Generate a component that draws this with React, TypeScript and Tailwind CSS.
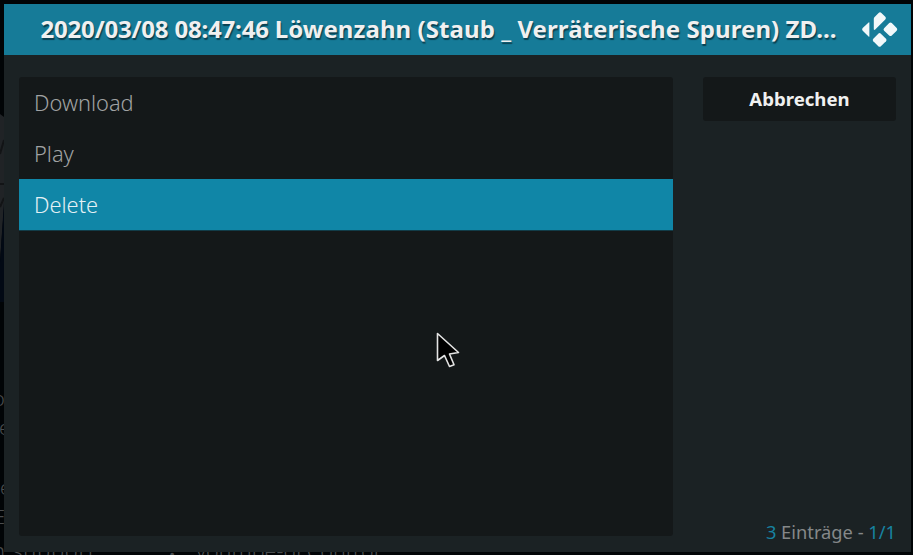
const entries = ['Download', 'Play', 'Delete'];

function KodiLogo() {
  return (
    <svg className="h-[37px] w-[37px]" viewBox="0 0 37 37" fill="#f2f8fa" aria-hidden="true">
      <path d="M13.4 6.2 17.6 1.9Q19 .6 20.4 1.9L24.3 5.8Q25.6 7.1 24.3 8.4L14.2 18.6Q12.8 19.6 12.8 18V8Q12.8 6.9 13.4 6.2Z" />
      <path d="M8.4 12V25.2Q8.4 26.2 7.6 25.5L1.7 19.7Q.4 18.4 1.7 17.1L7.6 11.5Q8.4 10.8 8.4 12Z" />
      <path d="M23.1 17.2 28.2 12.1Q29.5 10.9 30.8 12.1L35.7 17.1Q36.9 18.4 35.7 19.7L30.8 24.5Q29.5 25.7 28.2 24.5L23.1 19.7Q21.9 18.4 23.1 17.2Z" />
      <path d="M12.3 27.7 17.3 22.7Q18.6 21.5 19.9 22.7L25 27.7Q26.2 29 25 30.3L19.9 35.2Q18.6 36.4 17.3 35.2L12.3 30.3Q11.1 29 12.3 27.7Z" />
    </svg>
  );
}

function Backdrop() {
  return (
    <div className="absolute inset-0 overflow-hidden bg-[#010406] text-[20px] leading-none font-light text-[#4a4d4f]">
      <svg className="absolute top-[112px] left-0 h-[190px] w-1" viewBox="0 0 4 190" preserveAspectRatio="none" aria-hidden="true">
        <path d="M0 2 4 5V95L0 150Z" fill="#202326" />
        <path d="M0 42 4 28M0 72H4M0 95 4 86" stroke="#121416" strokeWidth="2" />
        <path d="M0 150 4 90V190H0Z" fill="#020914" />
      </svg>
      <span className="absolute top-[389px] -left-[7px]">o</span>
      <span className="absolute top-[418px] -left-px">e</span>
      <span className="absolute top-[478px] left-0">e</span>
      <span className="absolute top-[507px] -left-[6px]">E</span>
      <span className="absolute top-[539px] -left-[8px] text-[22px] tracking-[0.7px] whitespace-pre">n support.</span>
      <span className="absolute top-[543px] left-[168px] text-[22px]">•</span>
      <span className="absolute top-[540px] left-[196px] text-[21.5px] whitespace-pre">youtube-dl Control</span>
    </div>
  );
}

export default function App() {
  return (
    <div className="relative h-[555px] w-[913px] overflow-hidden pt-1 pl-1 font-['Noto_Sans',sans-serif]">
      <Backdrop />
      <section className="relative flex h-[548px] w-[907px] flex-col bg-[#1b2224]">
        <header className="flex h-[51px] shrink-0 items-center justify-between bg-[#167b98] pr-[13px] pl-[36.5px]">
          <h1 className="pb-px text-[24px] leading-[48px] font-bold tracking-[0.07px] whitespace-nowrap text-[#f0f0f0] [text-shadow:1px_2px_1px_#0b4050]">
            <span className="tracking-[-0.19px]">2020/03/08 08:47:46 </span>Löwenzahn (Staub _ Verräterische Spuren) ZD...
          </h1>
          <KodiLogo />
        </header>
        <div className="flex min-h-0 flex-1 gap-[30px] pt-[22px] pr-[15px] pb-4 pl-[15px]">
          <ul className="h-[459px] w-[654px] rounded-[3px] bg-[#141819]">
            {entries.map((entry) => (
              <li
                key={entry}
                className={
                  entry === 'Delete'
                    ? 'h-[51px] bg-[#1086a7] pl-[15px] text-[21.8px] leading-[52px] font-[340] text-[#e4f1f5] shadow-[0_1px_0_#123c48]'
                    : 'h-[51px] pl-[15px] text-[21.8px] leading-[52px] font-[340] text-[#a0a2a3]'
                }
              >
                {entry}
              </li>
            ))}
          </ul>
          <aside className="flex flex-1 flex-col justify-between">
            <button className="h-11 rounded-[3px] bg-[#141819] pb-px text-[18.6px] leading-[43px] font-bold text-[#f0f0f0]">Abbrechen</button>
            <p className="-mb-[9px] text-right text-[18.3px] leading-[26px] whitespace-nowrap text-[#858889]">
              <span className="text-[#1783a1]">3</span> Einträge - <span className="text-[#1783a1]">1/1</span>
            </p>
          </aside>
        </div>
      </section>
      <svg className="absolute top-[331px] left-[435px] h-[38px] w-[26px]" viewBox="0 0 26 38" aria-hidden="true">
        <path d="M2.5 2.5V29.5L9.5 24.5 14.5 35.5 19 33.8 14.5 23 23.5 21.5Z" fill="#000" stroke="#e4e4e4" strokeWidth="1.6" strokeLinejoin="round" />
      </svg>
    </div>
  );
}
